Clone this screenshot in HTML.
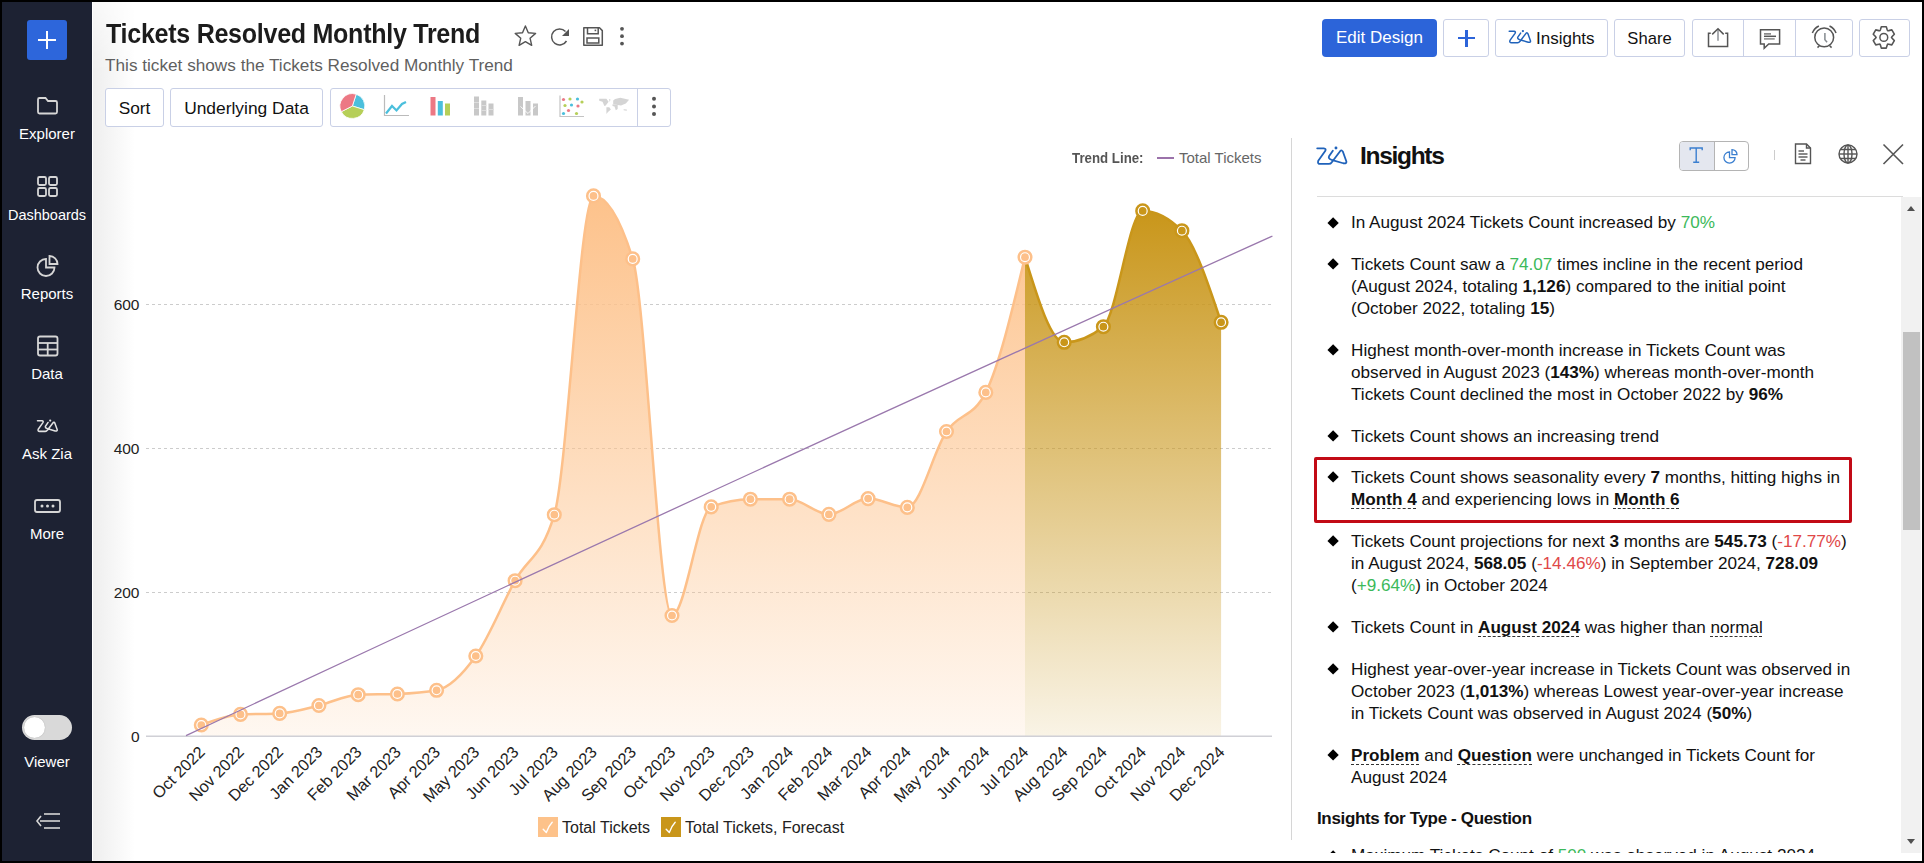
<!DOCTYPE html>
<html><head><meta charset="utf-8">
<style>
*{box-sizing:border-box;margin:0;padding:0}
html,body{width:1924px;height:863px;overflow:hidden;background:#000;font-family:"Liberation Sans",sans-serif;color:#111}
.a{position:absolute}
#side{left:2px;top:2px;width:90px;height:859px;background:#1d2233}
#main{left:92px;top:2px;width:1830px;height:859px;background:#fff;overflow:hidden}
#shade{left:93px;top:2px;width:42px;height:859px;background:linear-gradient(to right,#eeeeee,#ffffff);-webkit-mask-image:linear-gradient(to bottom,rgba(0,0,0,0.45),#000 70px)}
.nav{left:2px;width:90px;text-align:center;color:#fff;font-size:15px;line-height:17px;margin-top:-0.6px}
.btn{border:1px solid #c9d0e6;border-radius:3px;background:#fff;font-size:17px;color:#111;line-height:19px;white-space:nowrap}
.t{white-space:nowrap}
.ins{left:1351px;font-size:17.15px;line-height:22.4px;color:#111;white-space:nowrap;margin-top:0}
.dm{position:absolute;left:1328.6px;width:8.2px;height:8.2px;background:#000;transform:rotate(45deg);margin-top:0.5px}
.g{color:#3cb95a}.r{color:#e04848}
b{font-weight:bold}
u{text-decoration:underline dashed #333;text-decoration-thickness:1px;text-underline-offset:2.5px;text-decoration-skip-ink:none}
</style></head><body>
<div id="side" class="a"></div>
<div id="main" class="a"></div>
<div class="a" style="left:92px;top:2px;width:1px;height:859px;background:#fff"></div>
<div id="shade" class="a"></div>

<!-- sidebar -->
<div class="a" style="left:27px;top:20px;width:40px;height:40px;background:#2d66db;border-radius:3px"></div>
<div class="a" style="left:38px;top:39px;width:18px;height:2px;background:#fff"></div>
<div class="a" style="left:46px;top:31px;width:2px;height:18px;background:#fff"></div>

<svg class="a" style="left:0;top:0" width="92" height="863" fill="none" stroke="#d6d6d6" stroke-width="1.8">
  <!-- folder -->
  <path d="M38 99.5 Q38 98 39.5 98 H45.5 L48 101 H55.5 Q57 101 57 102.5 V112 Q57 113.5 55.5 113.5 H39.5 Q38 113.5 38 112 Z"/>
  <!-- dashboards -->
  <rect x="38" y="177" width="8" height="8" rx="1.5"/><rect x="49" y="177" width="8" height="8" rx="1.5"/>
  <rect x="38" y="188" width="8" height="8" rx="1.5"/><rect x="49" y="188" width="8" height="8" rx="1.5"/>
  <!-- reports -->
  <path d="M46 259 A8.5 8.5 0 1 0 54.5 267.5 H46 Z"/>
  <path d="M49.5 256 A8 8 0 0 1 57.5 264 H49.5 Z"/>
  <!-- data -->
  <rect x="38" y="336.5" width="19.5" height="19" rx="2"/>
  <line x1="38" y1="343" x2="57.5" y2="343"/><line x1="38" y1="349.5" x2="57.5" y2="349.5"/><line x1="47.7" y1="343" x2="47.7" y2="355.5"/>
  <g transform="translate(37.5 420.8) scale(0.0235)" stroke="#e2e2e2" stroke-width="64" stroke-linecap="round" stroke-linejoin="round"><path d="M 0 0 H 190 Q 270 10 230 80 L 30 360 Q 0 450 90 450 H 330 Q 390 450 420 400 L 670 70 Q 710 40 740 100 L 840 380 Q 850 450 750 430 L 410 330 Q 310 290 340 230 L 450 70"/></g>
  <!-- more -->
  <rect x="35" y="500" width="25" height="12" rx="2"/>
  <!-- collapse -->
  <line x1="44" y1="814" x2="60" y2="814" stroke-width="1.6"/><line x1="40" y1="821" x2="60" y2="821" stroke-width="1.6"/><line x1="44" y1="828" x2="60" y2="828" stroke-width="1.6"/>
  <path d="M41 816 L37 821 L41 826" stroke-width="1.6"/>
</svg>
<svg class="a" style="left:0;top:0" width="92" height="863"><circle cx="42" cy="506" r="1.5" fill="#d6d6d6"/><circle cx="47.5" cy="506" r="1.5" fill="#d6d6d6"/><circle cx="53" cy="506" r="1.5" fill="#d6d6d6"/><circle cx="50.2" cy="420.6" r="1.1" fill="#e2e2e2"/></svg>

<div class="a nav t" style="top:126px">Explorer</div>
<div class="a nav t" style="top:207.3px;font-size:14.5px">Dashboards</div>
<div class="a nav t" style="top:286px">Reports</div>
<div class="a nav t" style="top:366px">Data</div>
<div class="a nav t" style="top:446px">Ask Zia</div>
<div class="a nav t" style="top:526px">More</div>
<div class="a" style="left:22px;top:715px;width:50px;height:25px;border-radius:13px;background:#d9d9d9"></div>
<div class="a" style="left:23.5px;top:717px;width:21px;height:21px;border-radius:11px;background:#fff;box-shadow:0 0 1px #999"></div>
<div class="a nav t" style="top:753.8px">Viewer</div>

<!-- header -->
<div class="a t" style="left:106px;top:19px;font-size:27px;line-height:31px;font-weight:bold;color:#1c1c1c;letter-spacing:-0.3px;transform-origin:0 0;transform:scaleX(0.928)">Tickets Resolved Monthly Trend</div>
<div class="a t" style="left:105px;top:56px;font-size:17.2px;line-height:19px;color:#5f5f5f">This ticket shows the Tickets Resolved Monthly Trend</div>

<svg class="a" style="left:500px;top:14px" width="140" height="44" fill="none" stroke="#555" stroke-width="1.5">
  <path d="M25.40 12.00 L28.28 18.74 L35.58 19.39 L30.06 24.21 L31.69 31.36 L25.40 27.60 L19.11 31.36 L20.74 24.21 L15.22 19.39 L22.52 18.74 Z" stroke-linejoin="round" stroke-width="1.4"/>
  <path d="M66.5 27 A8 8 0 1 1 65.5 17.5"/>
  <path d="M69 15 L69 22 L62 22 Z" fill="#555" stroke="none"/>
  <path d="M83.8 13.8 H99.5 L102.3 16.6 V31.2 H83.8 Z" stroke-linejoin="round"/>
  <path d="M87.5 13.8 V19.7 H98.2 V13.8"/>
  <rect x="87" y="24" width="11.8" height="5"/>
  <rect x="94.6" y="15.6" width="1.6" height="1.6" fill="#555" stroke="none"/>
</svg>
<svg class="a" style="left:600px;top:14px" width="40" height="44"><circle cx="22" cy="14.8" r="1.9" fill="#555"/><circle cx="22" cy="22.2" r="1.9" fill="#555"/><circle cx="22" cy="29.6" r="1.9" fill="#555"/></svg>

<!-- right header buttons -->
<div class="a t" style="left:1322px;top:19px;width:115px;height:38px;background:#2c64d9;border-radius:4px;color:#fff;font-size:17px;line-height:38px;text-align:center">Edit Design</div>
<div class="a btn" style="left:1443px;top:19px;width:46px;height:38px"></div>
<div class="a" style="left:1458px;top:37px;width:17px;height:2.4px;background:#2c64d9"></div>
<div class="a" style="left:1465.3px;top:29.5px;width:2.4px;height:17px;background:#2c64d9"></div>
<div class="a btn" style="left:1495px;top:19px;width:113px;height:38px"></div>
<svg class="a" style="left:0;top:0" width="1924" height="200">
<g transform="translate(1509.2 31.3) scale(0.02537)" fill="none" stroke="#1f62ba" stroke-width="58" stroke-linecap="round" stroke-linejoin="round"><path d="M 0 0 H 190 Q 270 10 230 80 L 30 360 Q 0 450 90 450 H 330 Q 390 450 420 400 L 670 70 Q 710 40 740 100 L 840 380 Q 850 450 750 430 L 410 330 Q 310 290 340 230 L 450 70"/><circle cx="540" cy="-10" r="45" fill="#1f62ba" stroke="none"/></g>
<g transform="translate(1317.2 148.3) scale(0.03475)" fill="none" stroke="#1f62ba" stroke-width="52" stroke-linecap="round" stroke-linejoin="round"><path d="M 0 0 H 190 Q 270 10 230 80 L 30 360 Q 0 450 90 450 H 330 Q 390 450 420 400 L 670 70 Q 710 40 740 100 L 840 380 Q 850 450 750 430 L 410 330 Q 310 290 340 230 L 450 70"/><circle cx="540" cy="-10" r="42" fill="#1f62ba" stroke="none"/></g>
</svg>
<div class="a t" style="left:1536px;top:29px;font-size:17px;line-height:19px">Insights</div>
<div class="a btn" style="left:1614px;top:19px;width:71px;height:38px;text-align:center;line-height:37.6px;font-size:16.6px">Share</div>
<div class="a btn" style="left:1692px;top:19px;width:161px;height:38px"></div>
<div class="a" style="left:1743px;top:19px;width:1px;height:38px;background:#c9d0e6"></div>
<div class="a" style="left:1795px;top:19px;width:1px;height:38px;background:#c9d0e6"></div>
<div class="a btn" style="left:1859px;top:19px;width:51px;height:38px"></div>
<svg class="a" style="left:1692px;top:19px" width="220" height="38" fill="none" stroke="#555" stroke-width="1.5">
  <!-- share/export -->
  <path d="M18.75 14.3 H16.5 V27.5 H35.6 V14.3 H33.2"/><path d="M26 10.2 V21.7" stroke="#8d9196"/><path d="M20.2 15.4 L26 9.7 L31.7 15.4"/>
  <!-- comment -->
  <path d="M68.5 10.8 H87.6 V24.9 H76.7 L72.2 29.3 V24.9 H68.5 Z"/><line x1="72" y1="14.9" x2="79" y2="14.9" stroke="#777"/><line x1="72" y1="17.3" x2="84" y2="17.3"/><line x1="72" y1="19.9" x2="82.7" y2="19.9" stroke="#888"/>
  <!-- alarm -->
  <circle cx="132.2" cy="18.4" r="9.4"/><path d="M132.9 14.1 V20.8 L135.1 23.2" stroke="#858a8f"/><path d="M120.36 14.09 A12.6 12.6 0 0 1 126.88 6.98"/><path d="M137.52 6.98 A12.6 12.6 0 0 1 144.04 14.09"/><path d="M125.5 28.6 L127.6 26.5"/><path d="M139.6 28.6 L137.5 26.5"/>
  <!-- gear -->
  <circle cx="191.8" cy="18.4" r="3.9"/>
  <path d="M188.38 10.73 L189.33 7.68 L194.27 7.68 L195.22 10.73 L195.65 11.73 L196.74 11.60 L199.84 10.90 L202.32 15.18 L200.15 17.52 L199.50 18.40 L200.15 19.28 L202.32 21.62 L199.84 25.90 L196.74 25.20 L195.65 25.07 L195.22 26.07 L194.27 29.12 L189.33 29.12 L188.38 26.07 L187.95 25.07 L186.86 25.20 L183.76 25.90 L181.28 21.62 L183.45 19.28 L184.10 18.40 L183.45 17.52 L181.28 15.18 L183.76 10.90 L186.86 11.60 L187.95 11.73 Z" stroke-linejoin="round" stroke-width="1.6"/>
</svg>

<!-- toolbar -->
<div class="a btn" style="left:105px;top:88px;width:59px;height:39px;text-align:center;line-height:38.5px;font-size:17.3px">Sort</div>
<div class="a btn" style="left:170px;top:88px;width:153px;height:39px;text-align:center;line-height:38.5px;font-size:17.4px">Underlying Data</div>
<div class="a btn" style="left:330px;top:88px;width:341px;height:39px"></div>
<div class="a" style="left:637px;top:88px;width:1px;height:39px;background:#c9d0e6"></div>
<svg class="a" style="left:330px;top:88px" width="341" height="39">
  <!-- pie -->
  <g stroke="#fff" stroke-width="0.8"><path d="M22.4 18 L26.2 6.2 A12.5 12.5 0 0 1 34.3 21.7 Z" fill="#4bbfdc"/>
  <path d="M22.4 18 L34.3 21.7 A12.5 12.5 0 0 1 11.3 23.7 Z" fill="#b6cf58"/>
  <path d="M22.4 18 L11.3 23.7 A12.5 12.5 0 0 1 26.2 6.2 Z" fill="#ec7884"/></g>
  <!-- line -->
  <path d="M54.5 7 V27.5 H79" fill="none" stroke="#bbb" stroke-width="1.2"/>
  <path d="M56 25.5 L62 18 L66.5 22.5 L72 16 L76 14" fill="none" stroke="#4bbfdc" stroke-width="2.2"/>
  <!-- bars -->
  <rect x="100.5" y="9" width="5" height="18.5" fill="#ec7884"/>
  <rect x="107.8" y="13" width="5" height="14.5" fill="#4bbfdc"/>
  <rect x="115" y="15.5" width="5" height="12" fill="#b6cf58"/>
  <!-- stacked gray -->
  <g fill="#c8c8c8"><rect x="144" y="8.5" width="5" height="19"/><rect x="151.3" y="12.5" width="5" height="15"/><rect x="158.5" y="15.5" width="5" height="12"/></g>
  <g fill="#ddd"><rect x="144" y="14" width="5" height="1"/><rect x="144" y="20" width="5" height="1"/><rect x="151.3" y="17" width="5" height="1"/><rect x="151.3" y="22" width="5" height="1"/><rect x="158.5" y="21" width="5" height="1"/></g>
  <!-- combo -->
  <g fill="#c8c8c8"><rect x="188" y="9" width="5" height="18.5"/><rect x="195.5" y="13" width="5" height="14.5"/><rect x="203" y="15.5" width="5" height="12"/></g>
  <path d="M190.5 18.5 L198 25.5 L205.5 18" fill="none" stroke="#fff" stroke-width="0.9"/>
  <!-- scatter -->
  <path d="M230 7.5 V28.5 H254" fill="none" stroke="#c4c4c4" stroke-width="1.2"/>
  <g><circle cx="233.5" cy="11.5" r="1.6" fill="#ec7884"/><circle cx="240" cy="11" r="1.6" fill="#b6cf58"/><circle cx="247.5" cy="11" r="1.6" fill="#4bbfdc"/><circle cx="252" cy="14" r="1.6" fill="#b6cf58"/><circle cx="235" cy="17.5" r="1.6" fill="#b6cf58"/><circle cx="241.5" cy="17" r="1.6" fill="#4bbfdc"/><circle cx="248" cy="18" r="1.6" fill="#ec7884"/><circle cx="238.5" cy="22.5" r="1.6" fill="#ec7884"/><circle cx="233.5" cy="25.5" r="1.6" fill="#4bbfdc"/><circle cx="246.5" cy="25.5" r="1.6" fill="#b6cf58"/></g>
  <!-- map -->
  <g fill="#d4d4d4"><path d="M269.2 10.8 L276.4 10.8 L278.6 13.7 L275.7 17.6 L274.4 18 L272.5 13.7 L269.2 12.8 Z"/><path d="M279 11 L280.5 11.5 L279.8 14 Z"/><path d="M276.4 19.3 L279.3 19.3 L280.9 21.5 L278 24.1 L276.4 26.1 Z"/><path d="M283.2 12.4 L285.1 11.1 L290.3 9.8 L299.1 11.8 L295.8 15.4 L291 17.6 L287.7 17 L283.2 16.3 Z"/><path d="M282.5 16.3 L287.7 17 L287.7 20.9 L285.8 22.2 L284.5 18.6 L282.5 18 Z"/><path d="M293.6 21.2 L296.8 21.5 L296.8 22.8 L293.6 22.2 Z"/></g>
  <!-- dots -->
  <circle cx="324" cy="10.8" r="2" fill="#555"/><circle cx="324" cy="18.4" r="2" fill="#555"/><circle cx="324" cy="26" r="2" fill="#555"/>
</svg>

<!-- chart -->
<svg width="1924" height="863" style="position:absolute;left:0;top:0">
<defs><linearGradient id="go" x1="0" y1="195" x2="0" y2="736" gradientUnits="userSpaceOnUse"><stop offset="0" stop-color="#fdc28b"/><stop offset="1" stop-color="#fdc28b" stop-opacity="0.12"/></linearGradient><linearGradient id="gf" x1="0" y1="210" x2="0" y2="736" gradientUnits="userSpaceOnUse"><stop offset="0" stop-color="#c9961a"/><stop offset="1" stop-color="#c9961a" stop-opacity="0.11"/></linearGradient></defs>
<text x="139.5" y="310.0" text-anchor="end" font-family='Liberation Sans' font-size="15.5" fill="#222">600</text>
<text x="139.5" y="454.0" text-anchor="end" font-family='Liberation Sans' font-size="15.5" fill="#222">400</text>
<text x="139.5" y="598.0" text-anchor="end" font-family='Liberation Sans' font-size="15.5" fill="#222">200</text>
<text x="139.5" y="741.8" text-anchor="end" font-family='Liberation Sans' font-size="15.5" fill="#222">0</text>
<line x1="146" y1="304.5" x2="1272" y2="304.5" stroke="#cccccc" stroke-width="1" stroke-dasharray="3,3"/>
<line x1="146" y1="448.5" x2="1272" y2="448.5" stroke="#cccccc" stroke-width="1" stroke-dasharray="3,3"/>
<line x1="146" y1="592.5" x2="1272" y2="592.5" stroke="#cccccc" stroke-width="1" stroke-dasharray="3,3"/>
<path d="M 201.26 725.00 C 214.33 720.03 227.41 715.07 240.48 714.40 C 253.56 713.73 266.63 714.07 279.71 713.40 C 292.78 712.73 305.86 708.62 318.94 705.50 C 332.01 702.38 345.08 695.17 358.16 694.70 C 371.23 694.23 384.31 694.47 397.38 694.00 C 410.46 693.53 423.54 692.77 436.61 690.30 C 449.69 687.83 462.76 674.27 475.83 656.00 C 488.91 637.73 501.98 604.25 515.06 580.70 C 528.13 557.15 541.21 558.70 554.29 514.70 C 567.36 470.70 580.44 195.90 593.51 195.90 C 606.59 195.90 619.66 216.90 632.74 258.90 C 645.81 300.90 658.88 615.50 671.96 615.50 C 685.03 615.50 698.11 512.03 711.18 506.90 C 724.26 501.77 737.33 499.20 750.41 499.20 C 763.49 499.20 776.56 499.20 789.63 499.20 C 802.71 499.20 815.78 514.40 828.86 514.40 C 841.94 514.40 855.01 498.60 868.09 498.60 C 881.16 498.60 894.24 507.40 907.31 507.40 C 920.38 507.40 933.46 450.67 946.53 431.50 C 959.61 412.33 972.68 418.47 985.76 392.40 C 998.84 366.33 1011.91 311.77 1024.99 257.20 L 1025.0 736.3 L 201.3 736.3 Z" fill="url(#go)"/>
<path d="M 1024.99 257.20 C 1038.06 299.75 1051.13 342.30 1064.21 342.30 C 1077.29 342.30 1090.36 337.10 1103.43 326.70 C 1116.51 316.30 1129.59 210.90 1142.66 210.90 C 1155.74 210.90 1168.81 217.50 1181.88 230.70 C 1194.96 243.90 1208.04 283.10 1221.11 322.30 L 1221.1 736.3 L 1025.0 736.3 Z" fill="url(#gf)"/>
<line x1="146" y1="736.3" x2="1272" y2="736.3" stroke="#d0d0d6" stroke-width="1.4"/>
<path d="M 201.26 725.00 C 214.33 720.03 227.41 715.07 240.48 714.40 C 253.56 713.73 266.63 714.07 279.71 713.40 C 292.78 712.73 305.86 708.62 318.94 705.50 C 332.01 702.38 345.08 695.17 358.16 694.70 C 371.23 694.23 384.31 694.47 397.38 694.00 C 410.46 693.53 423.54 692.77 436.61 690.30 C 449.69 687.83 462.76 674.27 475.83 656.00 C 488.91 637.73 501.98 604.25 515.06 580.70 C 528.13 557.15 541.21 558.70 554.29 514.70 C 567.36 470.70 580.44 195.90 593.51 195.90 C 606.59 195.90 619.66 216.90 632.74 258.90 C 645.81 300.90 658.88 615.50 671.96 615.50 C 685.03 615.50 698.11 512.03 711.18 506.90 C 724.26 501.77 737.33 499.20 750.41 499.20 C 763.49 499.20 776.56 499.20 789.63 499.20 C 802.71 499.20 815.78 514.40 828.86 514.40 C 841.94 514.40 855.01 498.60 868.09 498.60 C 881.16 498.60 894.24 507.40 907.31 507.40 C 920.38 507.40 933.46 450.67 946.53 431.50 C 959.61 412.33 972.68 418.47 985.76 392.40 C 998.84 366.33 1011.91 311.77 1024.99 257.20" fill="none" stroke="#fdc08a" stroke-width="2.5"/>
<path d="M 1024.99 257.20 C 1038.06 299.75 1051.13 342.30 1064.21 342.30 C 1077.29 342.30 1090.36 337.10 1103.43 326.70 C 1116.51 316.30 1129.59 210.90 1142.66 210.90 C 1155.74 210.90 1168.81 217.50 1181.88 230.70 C 1194.96 243.90 1208.04 283.10 1221.11 322.30" fill="none" stroke="#c9961a" stroke-width="2.5"/>
<circle cx="201.3" cy="725.0" r="6.3" fill="#fff" stroke="#fdc08a" stroke-width="2.5"/><circle cx="201.3" cy="725.0" r="3.85" fill="#fdc08a"/>
<circle cx="240.5" cy="714.4" r="6.3" fill="#fff" stroke="#fdc08a" stroke-width="2.5"/><circle cx="240.5" cy="714.4" r="3.85" fill="#fdc08a"/>
<circle cx="279.7" cy="713.4" r="6.3" fill="#fff" stroke="#fdc08a" stroke-width="2.5"/><circle cx="279.7" cy="713.4" r="3.85" fill="#fdc08a"/>
<circle cx="318.9" cy="705.5" r="6.3" fill="#fff" stroke="#fdc08a" stroke-width="2.5"/><circle cx="318.9" cy="705.5" r="3.85" fill="#fdc08a"/>
<circle cx="358.2" cy="694.7" r="6.3" fill="#fff" stroke="#fdc08a" stroke-width="2.5"/><circle cx="358.2" cy="694.7" r="3.85" fill="#fdc08a"/>
<circle cx="397.4" cy="694.0" r="6.3" fill="#fff" stroke="#fdc08a" stroke-width="2.5"/><circle cx="397.4" cy="694.0" r="3.85" fill="#fdc08a"/>
<circle cx="436.6" cy="690.3" r="6.3" fill="#fff" stroke="#fdc08a" stroke-width="2.5"/><circle cx="436.6" cy="690.3" r="3.85" fill="#fdc08a"/>
<circle cx="475.8" cy="656.0" r="6.3" fill="#fff" stroke="#fdc08a" stroke-width="2.5"/><circle cx="475.8" cy="656.0" r="3.85" fill="#fdc08a"/>
<circle cx="515.1" cy="580.7" r="6.3" fill="#fff" stroke="#fdc08a" stroke-width="2.5"/><circle cx="515.1" cy="580.7" r="3.85" fill="#fdc08a"/>
<circle cx="554.3" cy="514.7" r="6.3" fill="#fff" stroke="#fdc08a" stroke-width="2.5"/><circle cx="554.3" cy="514.7" r="3.85" fill="#fdc08a"/>
<circle cx="593.5" cy="195.9" r="6.3" fill="#fff" stroke="#fdc08a" stroke-width="2.5"/><circle cx="593.5" cy="195.9" r="3.85" fill="#fdc08a"/>
<circle cx="632.7" cy="258.9" r="6.3" fill="#fff" stroke="#fdc08a" stroke-width="2.5"/><circle cx="632.7" cy="258.9" r="3.85" fill="#fdc08a"/>
<circle cx="672.0" cy="615.5" r="6.3" fill="#fff" stroke="#fdc08a" stroke-width="2.5"/><circle cx="672.0" cy="615.5" r="3.85" fill="#fdc08a"/>
<circle cx="711.2" cy="506.9" r="6.3" fill="#fff" stroke="#fdc08a" stroke-width="2.5"/><circle cx="711.2" cy="506.9" r="3.85" fill="#fdc08a"/>
<circle cx="750.4" cy="499.2" r="6.3" fill="#fff" stroke="#fdc08a" stroke-width="2.5"/><circle cx="750.4" cy="499.2" r="3.85" fill="#fdc08a"/>
<circle cx="789.6" cy="499.2" r="6.3" fill="#fff" stroke="#fdc08a" stroke-width="2.5"/><circle cx="789.6" cy="499.2" r="3.85" fill="#fdc08a"/>
<circle cx="828.9" cy="514.4" r="6.3" fill="#fff" stroke="#fdc08a" stroke-width="2.5"/><circle cx="828.9" cy="514.4" r="3.85" fill="#fdc08a"/>
<circle cx="868.1" cy="498.6" r="6.3" fill="#fff" stroke="#fdc08a" stroke-width="2.5"/><circle cx="868.1" cy="498.6" r="3.85" fill="#fdc08a"/>
<circle cx="907.3" cy="507.4" r="6.3" fill="#fff" stroke="#fdc08a" stroke-width="2.5"/><circle cx="907.3" cy="507.4" r="3.85" fill="#fdc08a"/>
<circle cx="946.5" cy="431.5" r="6.3" fill="#fff" stroke="#fdc08a" stroke-width="2.5"/><circle cx="946.5" cy="431.5" r="3.85" fill="#fdc08a"/>
<circle cx="985.8" cy="392.4" r="6.3" fill="#fff" stroke="#fdc08a" stroke-width="2.5"/><circle cx="985.8" cy="392.4" r="3.85" fill="#fdc08a"/>
<circle cx="1025.0" cy="257.2" r="6.3" fill="#fff" stroke="#fdc08a" stroke-width="2.5"/><circle cx="1025.0" cy="257.2" r="3.85" fill="#fdc08a"/>
<circle cx="1064.2" cy="342.3" r="6.3" fill="#fff" stroke="#c9961a" stroke-width="2.5"/><circle cx="1064.2" cy="342.3" r="3.85" fill="#c9961a"/>
<circle cx="1103.4" cy="326.7" r="6.3" fill="#fff" stroke="#c9961a" stroke-width="2.5"/><circle cx="1103.4" cy="326.7" r="3.85" fill="#c9961a"/>
<circle cx="1142.7" cy="210.9" r="6.3" fill="#fff" stroke="#c9961a" stroke-width="2.5"/><circle cx="1142.7" cy="210.9" r="3.85" fill="#c9961a"/>
<circle cx="1181.9" cy="230.7" r="6.3" fill="#fff" stroke="#c9961a" stroke-width="2.5"/><circle cx="1181.9" cy="230.7" r="3.85" fill="#c9961a"/>
<circle cx="1221.1" cy="322.3" r="6.3" fill="#fff" stroke="#c9961a" stroke-width="2.5"/><circle cx="1221.1" cy="322.3" r="3.85" fill="#c9961a"/>
<path d="M 186.0 735.7 Q 729.2 480.9 1272.4 236.1" fill="none" stroke="#9a78ad" stroke-width="1.3"/>
<text x="205.8" y="753.0" text-anchor="end" transform="rotate(-45 205.8 753.0)" font-family='Liberation Sans' font-size="16.3" fill="#222">Oct 2022</text>
<text x="245.0" y="753.0" text-anchor="end" transform="rotate(-45 245.0 753.0)" font-family='Liberation Sans' font-size="16.3" fill="#222">Nov 2022</text>
<text x="284.2" y="753.0" text-anchor="end" transform="rotate(-45 284.2 753.0)" font-family='Liberation Sans' font-size="16.3" fill="#222">Dec 2022</text>
<text x="323.4" y="753.0" text-anchor="end" transform="rotate(-45 323.4 753.0)" font-family='Liberation Sans' font-size="16.3" fill="#222">Jan 2023</text>
<text x="362.7" y="753.0" text-anchor="end" transform="rotate(-45 362.7 753.0)" font-family='Liberation Sans' font-size="16.3" fill="#222">Feb 2023</text>
<text x="401.9" y="753.0" text-anchor="end" transform="rotate(-45 401.9 753.0)" font-family='Liberation Sans' font-size="16.3" fill="#222">Mar 2023</text>
<text x="441.1" y="753.0" text-anchor="end" transform="rotate(-45 441.1 753.0)" font-family='Liberation Sans' font-size="16.3" fill="#222">Apr 2023</text>
<text x="480.3" y="753.0" text-anchor="end" transform="rotate(-45 480.3 753.0)" font-family='Liberation Sans' font-size="16.3" fill="#222">May 2023</text>
<text x="519.6" y="753.0" text-anchor="end" transform="rotate(-45 519.6 753.0)" font-family='Liberation Sans' font-size="16.3" fill="#222">Jun 2023</text>
<text x="558.8" y="753.0" text-anchor="end" transform="rotate(-45 558.8 753.0)" font-family='Liberation Sans' font-size="16.3" fill="#222">Jul 2023</text>
<text x="598.0" y="753.0" text-anchor="end" transform="rotate(-45 598.0 753.0)" font-family='Liberation Sans' font-size="16.3" fill="#222">Aug 2023</text>
<text x="637.2" y="753.0" text-anchor="end" transform="rotate(-45 637.2 753.0)" font-family='Liberation Sans' font-size="16.3" fill="#222">Sep 2023</text>
<text x="676.5" y="753.0" text-anchor="end" transform="rotate(-45 676.5 753.0)" font-family='Liberation Sans' font-size="16.3" fill="#222">Oct 2023</text>
<text x="715.7" y="753.0" text-anchor="end" transform="rotate(-45 715.7 753.0)" font-family='Liberation Sans' font-size="16.3" fill="#222">Nov 2023</text>
<text x="754.9" y="753.0" text-anchor="end" transform="rotate(-45 754.9 753.0)" font-family='Liberation Sans' font-size="16.3" fill="#222">Dec 2023</text>
<text x="794.1" y="753.0" text-anchor="end" transform="rotate(-45 794.1 753.0)" font-family='Liberation Sans' font-size="16.3" fill="#222">Jan 2024</text>
<text x="833.4" y="753.0" text-anchor="end" transform="rotate(-45 833.4 753.0)" font-family='Liberation Sans' font-size="16.3" fill="#222">Feb 2024</text>
<text x="872.6" y="753.0" text-anchor="end" transform="rotate(-45 872.6 753.0)" font-family='Liberation Sans' font-size="16.3" fill="#222">Mar 2024</text>
<text x="911.8" y="753.0" text-anchor="end" transform="rotate(-45 911.8 753.0)" font-family='Liberation Sans' font-size="16.3" fill="#222">Apr 2024</text>
<text x="951.0" y="753.0" text-anchor="end" transform="rotate(-45 951.0 753.0)" font-family='Liberation Sans' font-size="16.3" fill="#222">May 2024</text>
<text x="990.3" y="753.0" text-anchor="end" transform="rotate(-45 990.3 753.0)" font-family='Liberation Sans' font-size="16.3" fill="#222">Jun 2024</text>
<text x="1029.5" y="753.0" text-anchor="end" transform="rotate(-45 1029.5 753.0)" font-family='Liberation Sans' font-size="16.3" fill="#222">Jul 2024</text>
<text x="1068.7" y="753.0" text-anchor="end" transform="rotate(-45 1068.7 753.0)" font-family='Liberation Sans' font-size="16.3" fill="#222">Aug 2024</text>
<text x="1107.9" y="753.0" text-anchor="end" transform="rotate(-45 1107.9 753.0)" font-family='Liberation Sans' font-size="16.3" fill="#222">Sep 2024</text>
<text x="1147.2" y="753.0" text-anchor="end" transform="rotate(-45 1147.2 753.0)" font-family='Liberation Sans' font-size="16.3" fill="#222">Oct 2024</text>
<text x="1186.4" y="753.0" text-anchor="end" transform="rotate(-45 1186.4 753.0)" font-family='Liberation Sans' font-size="16.3" fill="#222">Nov 2024</text>
<text x="1225.6" y="753.0" text-anchor="end" transform="rotate(-45 1225.6 753.0)" font-family='Liberation Sans' font-size="16.3" fill="#222">Dec 2024</text>
</svg>
<div class="a t" style="left:1072px;top:149.7px;font-size:15px;line-height:16px;font-weight:bold;color:#555;transform-origin:0 0;transform:scaleX(0.885)">Trend Line:</div>
<div class="a" style="left:1157px;top:157px;width:17px;height:2px;background:#9b72aa"></div>
<div class="a t" style="left:1179px;top:149.7px;font-size:15px;line-height:16px;color:#666">Total Tickets</div>
<div class="a" style="left:538px;top:817px;width:20px;height:20px;background:#fdc28a"></div>
<svg class="a" style="left:538px;top:817px" width="20" height="20"><path d="M5.2 12.2 L8.3 15.5 Q10.5 9 14.2 5.2" fill="none" stroke="#fff" stroke-width="1.4" stroke-linecap="round" stroke-linejoin="round"/></svg>
<div class="a t" style="left:562px;top:819px;font-size:16px;line-height:18px;color:#222">Total Tickets</div>
<div class="a" style="left:661px;top:817px;width:20px;height:20px;background:#c9961a"></div>
<svg class="a" style="left:661px;top:817px" width="20" height="20"><path d="M5.2 12.2 L8.3 15.5 Q10.5 9 14.2 5.2" fill="none" stroke="#fff" stroke-width="1.4" stroke-linecap="round" stroke-linejoin="round"/></svg>
<div class="a t" style="left:685px;top:819px;font-size:16px;line-height:18px;color:#222">Total Tickets, Forecast</div>

<!-- insights panel -->
<div class="a" style="left:1291px;top:138px;width:1px;height:702px;background:#d6d6d6"></div>

<div class="a t" style="left:1360px;top:142px;font-size:24.5px;line-height:27px;font-weight:bold;color:#111;letter-spacing:-1.3px">Insights</div>
<div class="a" style="left:1679px;top:141px;width:70px;height:30px;border:1px solid #b4b4b4;border-radius:4px;background:#fff;overflow:hidden">
  <div class="a" style="left:0;top:0;width:35px;height:28px;background:#e4e7ef;border-right:1px solid #b4b4b4"></div>
</div>
<svg class="a" style="left:1679px;top:141px" width="260" height="30" fill="none" stroke="#3a7fd0" stroke-width="1.3">
  <path d="M11.2 9.2 V7 H23.2 V9.2 M17.2 7 V21.2 M14.2 21.2 H20.2" stroke-width="1.4"/>
  <path d="M50.5 11 A5.6 5.6 0 1 0 56.1 16.6 H50.5 Z"/><path d="M53 8.6 A5 5 0 0 1 58 13.6 H53 Z"/>
  <line x1="95.5" y1="9" x2="95.5" y2="19" stroke="#ccc" stroke-width="1"/>
</svg>
<svg class="a" style="left:1780px;top:138px" width="130" height="34" fill="none" stroke="#555" stroke-width="1.4">
  <path d="M15.5 6 H26.5 L30.5 10 V25.5 H15.5 Z"/><path d="M26.5 6 V10 H30.5"/>
  <line x1="18.5" y1="13" x2="24" y2="13"/><line x1="18.5" y1="16" x2="27.5" y2="16"/><line x1="18.5" y1="19" x2="27.5" y2="19"/><line x1="20.5" y1="22" x2="25.5" y2="22"/>
  <circle cx="68" cy="16" r="9"/><ellipse cx="68" cy="16" rx="4" ry="9"/><line x1="68" y1="7" x2="68" y2="25"/><line x1="59" y1="16" x2="77" y2="16"/><path d="M60.5 11.5 H75.5 M60.5 20.5 H75.5"/>
  <path d="M103.5 6.5 L123 26 M123 6.5 L103.5 26" stroke-width="1.6"/>
</svg>
<div class="a" style="left:1317px;top:196px;width:586px;height:1px;background:#dcdcdc"></div>
<!-- scrollbar -->
<div class="a" style="left:1901px;top:197px;width:20px;height:656px;background:#f1f1f1"></div>
<div class="a" style="left:1903px;top:332px;width:17px;height:198px;background:#c1c1c1"></div>
<div class="a" style="left:1906.8px;top:206px;width:0;height:0;border-left:4.6px solid transparent;border-right:4.6px solid transparent;border-bottom:5.2px solid #505050"></div>
<div class="a" style="left:1906.8px;top:839px;width:0;height:0;border-left:4.6px solid transparent;border-right:4.6px solid transparent;border-top:5.2px solid #505050"></div>

<div class="a" style="left:1294px;top:197px;width:607px;height:656px;overflow:hidden">
<div style="position:absolute;left:-1294px;top:-197px;width:1924px;height:1000px">
<div class="dm" style="top:218px"></div>
<div class="a ins" style="top:211px">In August 2024 Tickets Count increased by <span class="g">70%</span></div>
<div class="dm" style="top:259px"></div>
<div class="a ins" style="top:252.5px">Tickets Count saw a <span class="g">74.07</span> times incline in the recent period<br>(August 2024, totaling <b>1,126</b>) compared to the initial point<br>(October 2022, totaling <b>15</b>)</div>
<div class="dm" style="top:345px"></div>
<div class="a ins" style="top:338.5px">Highest month-over-month increase in Tickets Count was<br>observed in August 2023 (<b>143%</b>) whereas month-over-month<br>Tickets Count declined the most in October 2022 by <b>96%</b></div>
<div class="dm" style="top:431px"></div>
<div class="a ins" style="top:424.5px">Tickets Count shows an increasing trend</div>
<div class="dm" style="top:472px"></div>
<div class="a ins" style="top:465.5px">Tickets Count shows seasonality every <b>7</b> months, hitting highs in<br><u><b>Month 4</b></u> and experiencing lows in <u><b>Month 6</b></u></div>
<div class="dm" style="top:536px"></div>
<div class="a ins" style="top:529.5px">Tickets Count projections for next <b>3</b> months are <b>545.73</b> (<span class="r">-17.77%</span>)<br>in August 2024, <b>568.05</b> (<span class="r">-14.46%</span>) in September 2024, <b>728.09</b><br>(<span class="g">+9.64%</span>) in October 2024</div>
<div class="dm" style="top:622px"></div>
<div class="a ins" style="top:615.5px">Tickets Count in <u><b>August 2024</b></u> was higher than <u>normal</u></div>
<div class="dm" style="top:664px"></div>
<div class="a ins" style="top:657.5px">Highest year-over-year increase in Tickets Count was observed in<br>October 2023 (<b>1,013%</b>) whereas Lowest year-over-year increase<br>in Tickets Count was observed in August 2024 (<b>50%</b>)</div>
<div class="dm" style="top:750px"></div>
<div class="a ins" style="top:743.5px"><u><b>Problem</b></u> and <u><b>Question</b></u> were unchanged in Tickets Count for<br>August 2024</div>
<div class="a t" style="left:1317px;top:808px;font-size:17px;line-height:22px;font-weight:bold;color:#111;letter-spacing:-0.35px">Insights for Type - Question</div>
<div class="dm" style="top:851px"></div>
<div class="a ins" style="top:844px">Maximum Tickets Count of <span class="g">500</span> was observed in August 2024</div>
</div>
</div>
<!-- red highlight -->
<div class="a" style="left:1314px;top:457px;width:538px;height:66px;border:3px solid #c20a16;border-radius:2px"></div>
</body></html>
